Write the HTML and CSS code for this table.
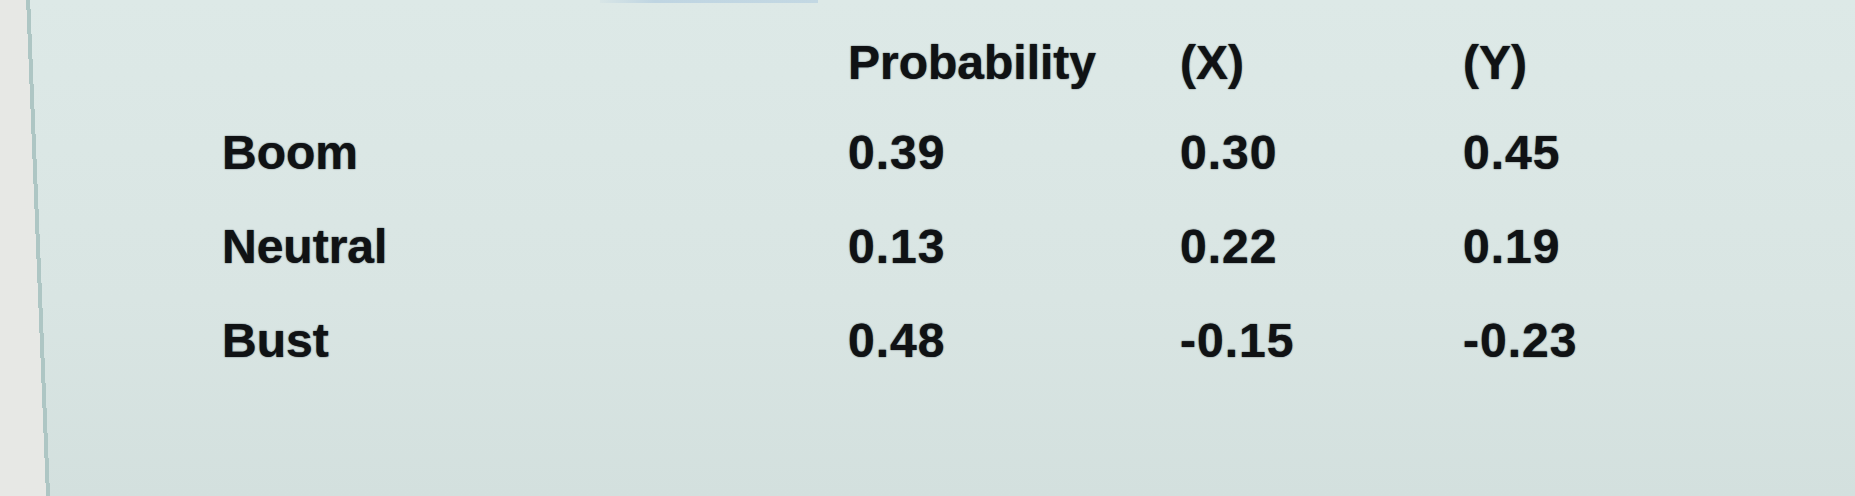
FILE: index.html
```html
<!DOCTYPE html>
<html lang="en">
<head>
<meta charset="utf-8">
<title>Probability table</title>
<link rel="stylesheet" href="styles.css">
</head>
<body>
<div class="screen">
  <div class="topline"></div>
  <div class="table">
    <div class="cell"></div>
    <div class="cell head">Probability</div>
    <div class="cell head">(X)</div>
    <div class="cell head">(Y)</div>

    <div class="cell label">Boom</div>
    <div class="cell num">0.39</div>
    <div class="cell num">0.30</div>
    <div class="cell num">0.45</div>

    <div class="cell label">Neutral</div>
    <div class="cell num">0.13</div>
    <div class="cell num">0.22</div>
    <div class="cell num">0.19</div>

    <div class="cell label">Bust</div>
    <div class="cell num">0.48</div>
    <div class="cell num">-0.15</div>
    <div class="cell num">-0.23</div>
  </div>
</div>
</body>
</html>
```

FILE: styles.css
```css
html, body {
  margin: 0;
  padding: 0;
  width: 1855px;
  height: 496px;
  overflow: hidden;
}

body {
  background:
    linear-gradient(87.7deg, #e7e8e5 0 46px, #aec6c4 46px 50px, rgba(0,0,0,0) 50px),
    linear-gradient(180deg, #dde9e7 0%, #d9e5e3 60%, #d3e0de 100%);
  font-family: "Liberation Sans", Arial, sans-serif;
  color: #101214;
}

.screen {
  display: flex;
  flex-direction: column;
  height: 496px;
}

.topline {
  margin-left: 600px;
  width: 218px;
  height: 3px;
  background: linear-gradient(90deg, rgba(195, 215, 226, 0.2), #bfd5e2 25%, #c3d8e3);
}

.table {
  display: grid;
  grid-template-columns: 626px 332px 283px auto;
  grid-template-rows: 90px 94px 94px 94px;
  margin-left: 222px;
  margin-top: 13px;
}

.cell {
  font-size: 48px;
  font-weight: 700;
  line-height: 93px;
  white-space: nowrap;
  text-shadow: 0 0 1px rgba(10, 20, 30, 0.8), 0 0 2px rgba(10, 20, 30, 0.3);
}

.num {
  letter-spacing: 1px;
}
```
